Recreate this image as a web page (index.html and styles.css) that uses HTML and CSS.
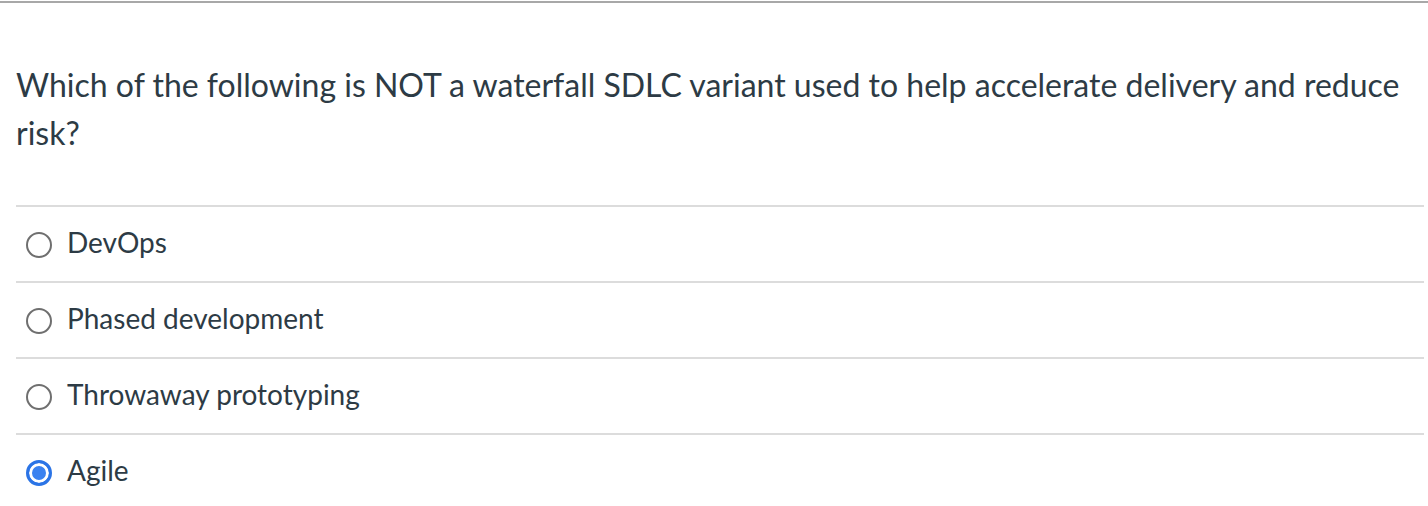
FILE: index.html
```html
<!DOCTYPE html>
<html>
<head>
<meta charset="utf-8">
<link rel="stylesheet" href="styles.css">
</head>
<body>
<div class="quiz">
  <div class="question">Which of the following is NOT a waterfall SDLC variant used to help accelerate delivery and reduce risk?</div>
  <div class="answers">
    <label class="answer"><span class="radio"></span><span class="label">DevOps</span></label>
    <label class="answer"><span class="radio"></span><span class="label">Phased development</span></label>
    <label class="answer"><span class="radio"></span><span class="label">Throwaway prototyping</span></label>
    <label class="answer"><span class="radio checked"></span><span class="label">Agile</span></label>
  </div>
</div>
</body>
</html>
```
FILE: styles.css
```css
html, body {
  margin: 0;
  padding: 0;
  background: #fff;
}
body {
  font-family: Lato, "Noto Sans", sans-serif;
  color: #2d3b45;
}
.quiz {
  margin-top: 1px;
  border-top: 2px solid #a8a8a8;
  height: 503px;
  box-sizing: border-box;
}
.question {
  padding: 58px 16px 0 16px;
  font-size: 32px;
  line-height: 48px;
  margin-bottom: 48px;
}
.answers {
  margin-left: 16px;
  width: 1408px;
}
.answer {
  display: flex;
  align-items: center;
  height: 74px;
  border-top: 2px solid #dcdcdc;
  font-size: 28px;
}
.radio {
  width: 22px;
  height: 22px;
  border: 2px solid #6f6f6f;
  border-radius: 50%;
  margin-left: 10px;
  margin-right: 15px;
  box-sizing: content-box;
  flex: none;
  position: relative;
  top: 1px;
}
.radio.checked {
  border: 3px solid #2b74e6;
  width: 20px;
  height: 20px;
  background: #3b82f0;
  box-shadow: inset 0 0 0 3px #fff;
}
.label {
  line-height: 1;
  position: relative;
  top: -2px;
}
```
